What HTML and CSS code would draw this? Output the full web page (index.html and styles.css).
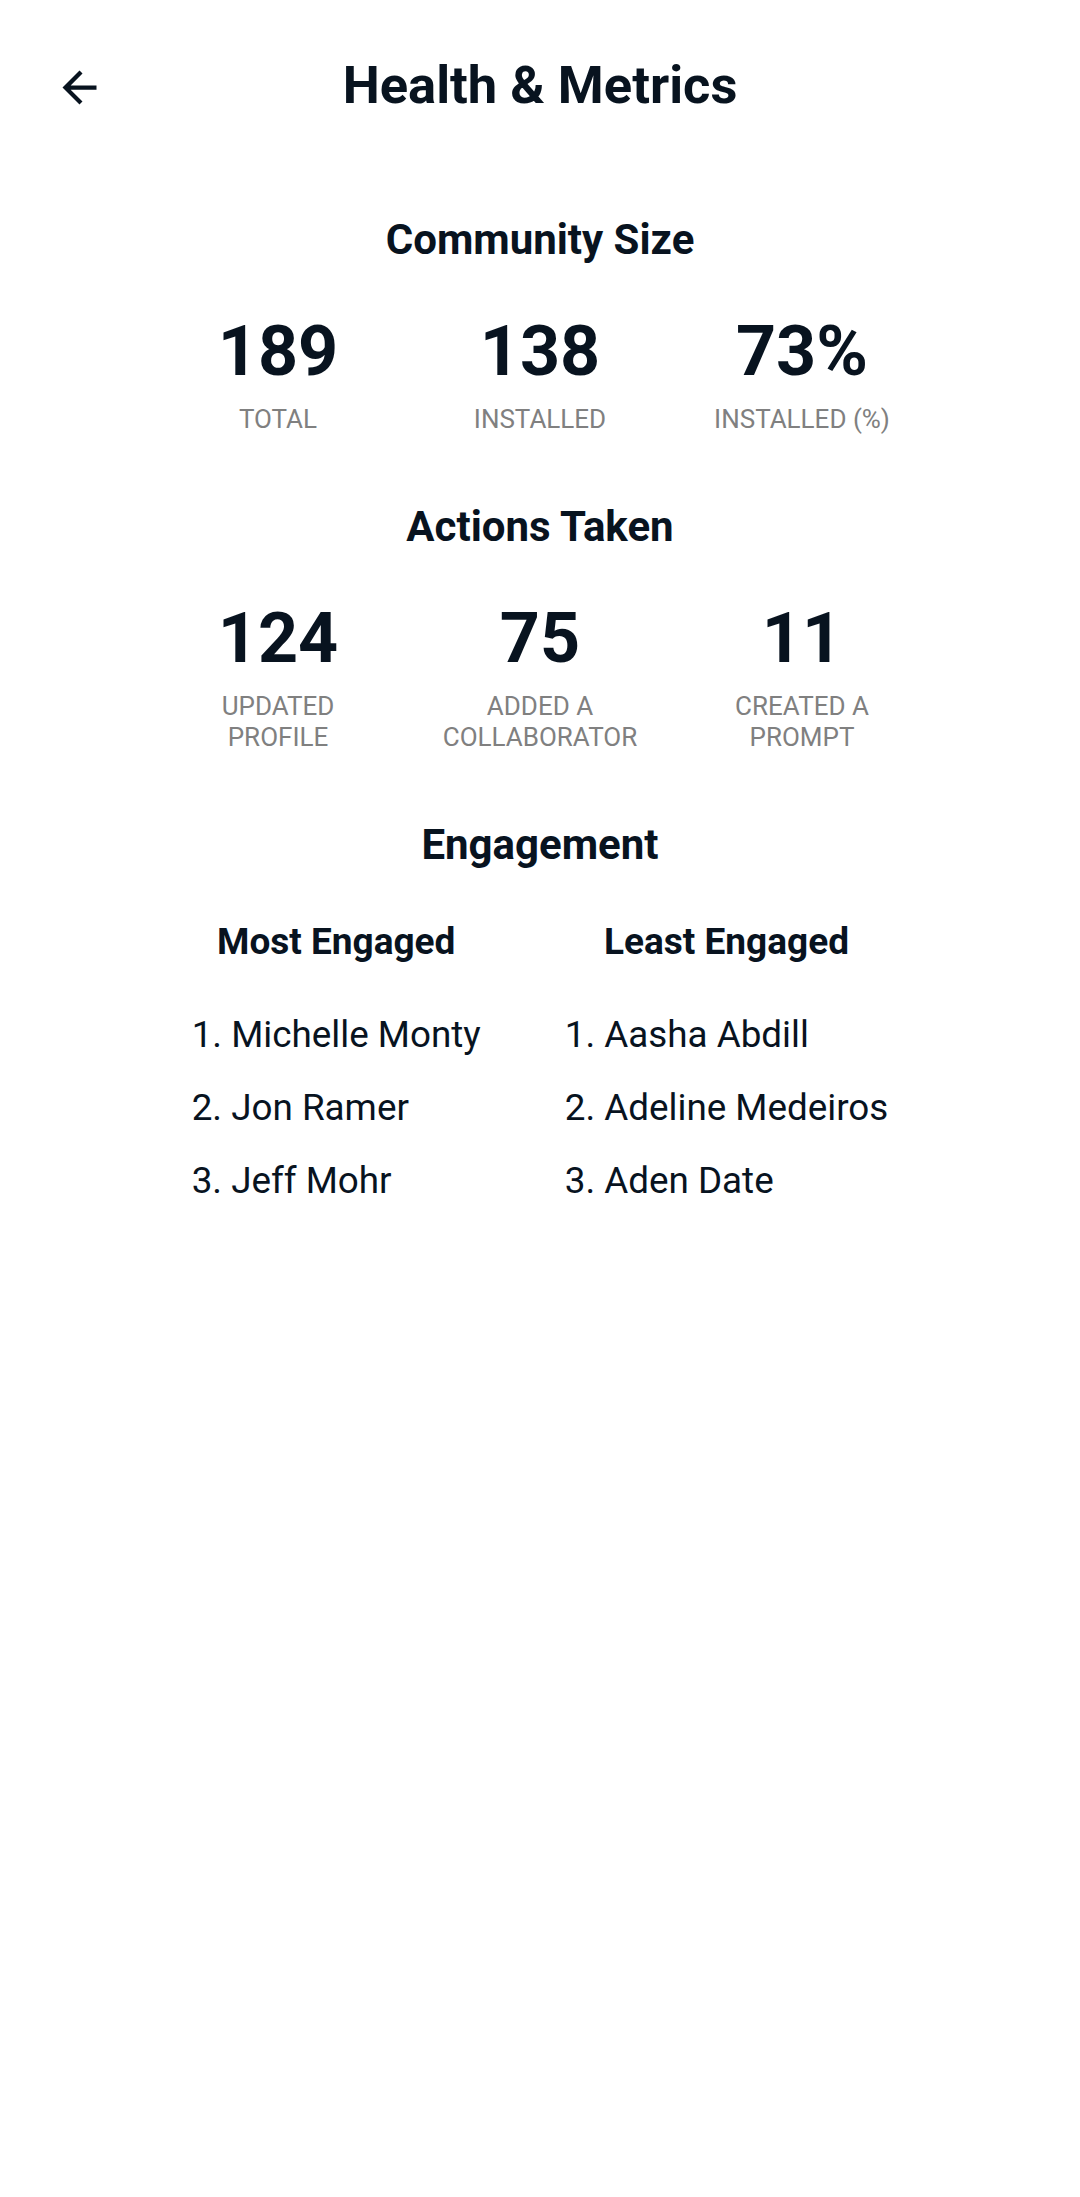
FILE: index.html
```
<!DOCTYPE html>
<html lang="en">
<head>
<meta charset="utf-8">
<title>Health &amp; Metrics</title>
<link rel="stylesheet" href="styles.css">
</head>
<body>
<div class="page">
  <header class="header">
    <button class="back" aria-label="Back">
      <svg viewBox="0 0 24 24" width="51" height="51"><path d="M20 11H7.83l5.59-5.59L12 4l-8 8 8 8 1.41-1.41L7.83 13H20v-2z" fill="#08131f"/></svg>
    </button>
    <h1 class="title">Health &amp; Metrics</h1>
    <div></div>
  </header>

  <section class="section">
    <h2 class="section-title">Community Size</h2>
    <div class="stats">
      <div class="stat"><div class="stat-num">189</div><div class="stat-label">TOTAL</div></div>
      <div class="stat"><div class="stat-num">138</div><div class="stat-label">INSTALLED</div></div>
      <div class="stat"><div class="stat-num">73%</div><div class="stat-label">INSTALLED (%)</div></div>
    </div>
  </section>

  <section class="section">
    <h2 class="section-title">Actions Taken</h2>
    <div class="stats">
      <div class="stat"><div class="stat-num">124</div><div class="stat-label">UPDATED PROFILE</div></div>
      <div class="stat"><div class="stat-num">75</div><div class="stat-label">ADDED A COLLABORATOR</div></div>
      <div class="stat"><div class="stat-num">11</div><div class="stat-label">CREATED A PROMPT</div></div>
    </div>
  </section>

  <section class="section">
    <h2 class="section-title">Engagement</h2>
    <div class="engage">
      <div class="engage-col">
        <h3 class="engage-title">Most Engaged</h3>
        <ol class="names">
          <li>1. Michelle Monty</li>
          <li>2. Jon Ramer</li>
          <li>3. Jeff Mohr</li>
        </ol>
      </div>
      <div class="engage-col">
        <h3 class="engage-title">Least Engaged</h3>
        <ol class="names">
          <li>1. Aasha Abdill</li>
          <li>2. Adeline Medeiros</li>
          <li>3. Aden Date</li>
        </ol>
      </div>
    </div>
  </section>
</div>
</body>
</html>
```
FILE: styles.css
```
* { box-sizing: border-box; }
html, body {
  margin: 0;
  padding: 0;
  background: #ffffff;
}
body {
  font-family: Roboto, "Liberation Sans", Arial, sans-serif;
  color: #08131f;
}
.page {
  width: 1080px;
  min-height: 2197px;
}
.header {
  display: grid;
  grid-template-columns: 1fr auto 1fr;
  align-items: start;
  padding-top: 55px;
}
.back {
  justify-self: start;
  margin: 7px 0 0 54px;
  padding: 0;
  border: 0;
  background: none;
  width: 51px;
  height: 51px;
  display: block;
}
.back svg { display: block; }
.title {
  margin: 0;
  font-size: 52.5px;
  line-height: 60px;
  font-weight: 700;
  text-align: center;
  letter-spacing: 0;
}
.section {
  display: flex;
  flex-direction: column;
  align-items: center;
}
.section-title {
  margin: 0;
  font-size: 42px;
  line-height: 48px;
  font-weight: 700;
  text-align: center;
}
.section:nth-of-type(1) { margin-top: 101px; }
.section + .section { margin-top: 68px; }
.stats {
  display: grid;
  grid-template-columns: repeat(3, 210px);
  column-gap: 52px;
  margin-top: 46px;
}
.stat {
  text-align: center;
}
.stat-num {
  font-size: 70px;
  line-height: 82px;
  font-weight: 700;
}
.stat-label {
  margin-top: 12px;
  font-size: 26px;
  line-height: 31px;
  color: #808080;
}
.engage {
  display: flex;
  justify-content: center;
  gap: 84px;
  margin-top: 52px;
}
.engage-col {
  display: flex;
  flex-direction: column;
  align-items: center;
}
.engage-title {
  margin: 0;
  font-size: 37px;
  line-height: 42px;
  font-weight: 700;
}
.names {
  list-style: none;
  margin: 35px 0 0;
  padding: 0;
  align-self: stretch;
}
.names li {
  font-size: 36.8px;
  line-height: 73px;
  white-space: nowrap;
}
```
